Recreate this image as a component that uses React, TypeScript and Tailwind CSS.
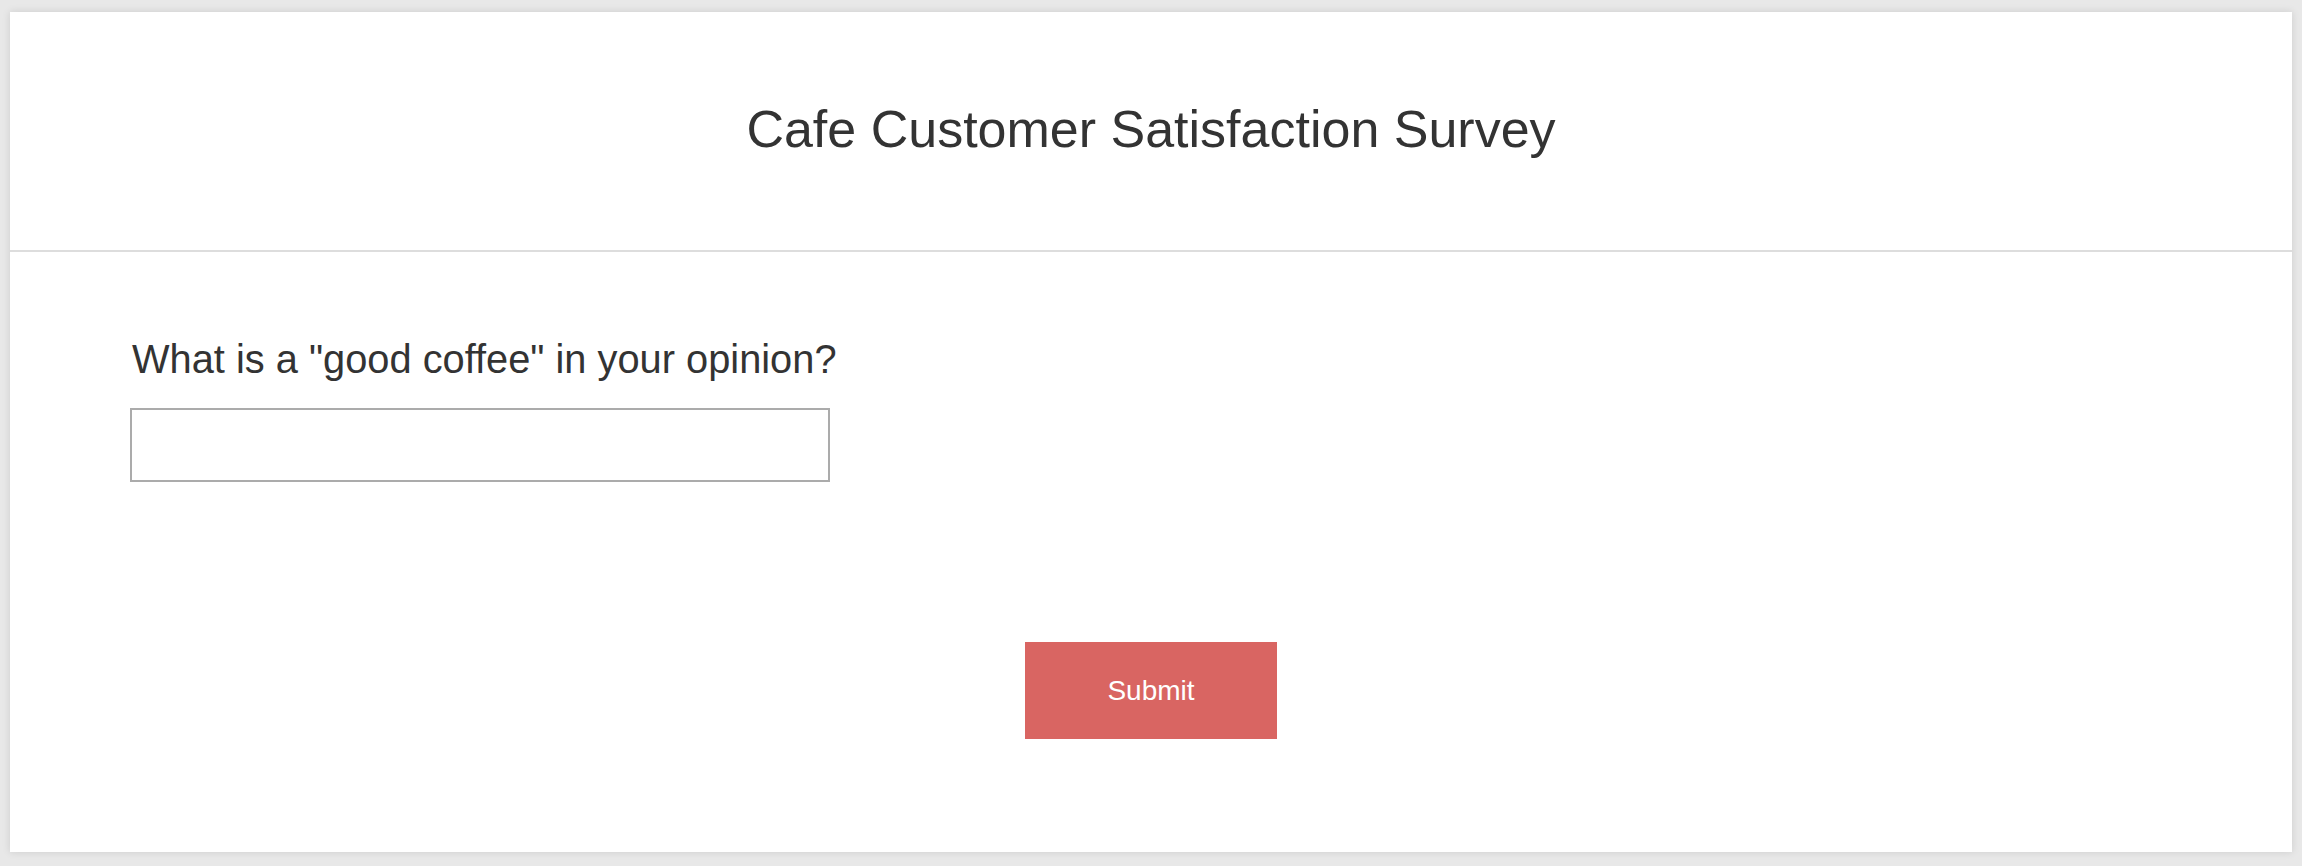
import React, { useState } from 'react';

const App: React.FC = () => {
  const [answer, setAnswer] = useState<string>('');

  return (
    <div
      className="min-h-screen w-full bg-[#e8e8e8] pt-[12px] px-[10px] pb-[14px]"
      style={{ fontFamily: '"Liberation Sans", Arial, Helvetica, sans-serif' }}
    >
      <div className="bg-white shadow-[0_0_8px_rgba(0,0,0,0.12)] h-[840px] flex flex-col">
        <div className="h-[240px] shrink-0 pt-[87px] text-center border-b-2 border-[#dddddd]">
          <h1 className="text-[52px] leading-[60px] font-normal text-[#333333]">
            Cafe Customer Satisfaction Survey
          </h1>
        </div>
        <div className="flex flex-col pt-[85px] px-[120px]">
          <label
            htmlFor="good-coffee"
            className="text-[39.8px] leading-[45px] text-[#333333] pl-[2px]"
          >
            What is a &quot;good coffee&quot; in your opinion?
          </label>
          <input
            id="good-coffee"
            type="text"
            value={answer}
            onChange={(e) => setAnswer(e.target.value)}
            className="mt-[26px] w-[700px] h-[74px] border-2 border-[#ababab] px-3 text-[28px] text-[#333333] outline-none"
          />
          <div className="flex justify-center mt-[160px]">
            <button
              type="button"
              className="w-[252px] h-[97px] bg-[#d96562] text-white text-[28px]"
            >
              Submit
            </button>
          </div>
        </div>
      </div>
    </div>
  );
};

export default App;
